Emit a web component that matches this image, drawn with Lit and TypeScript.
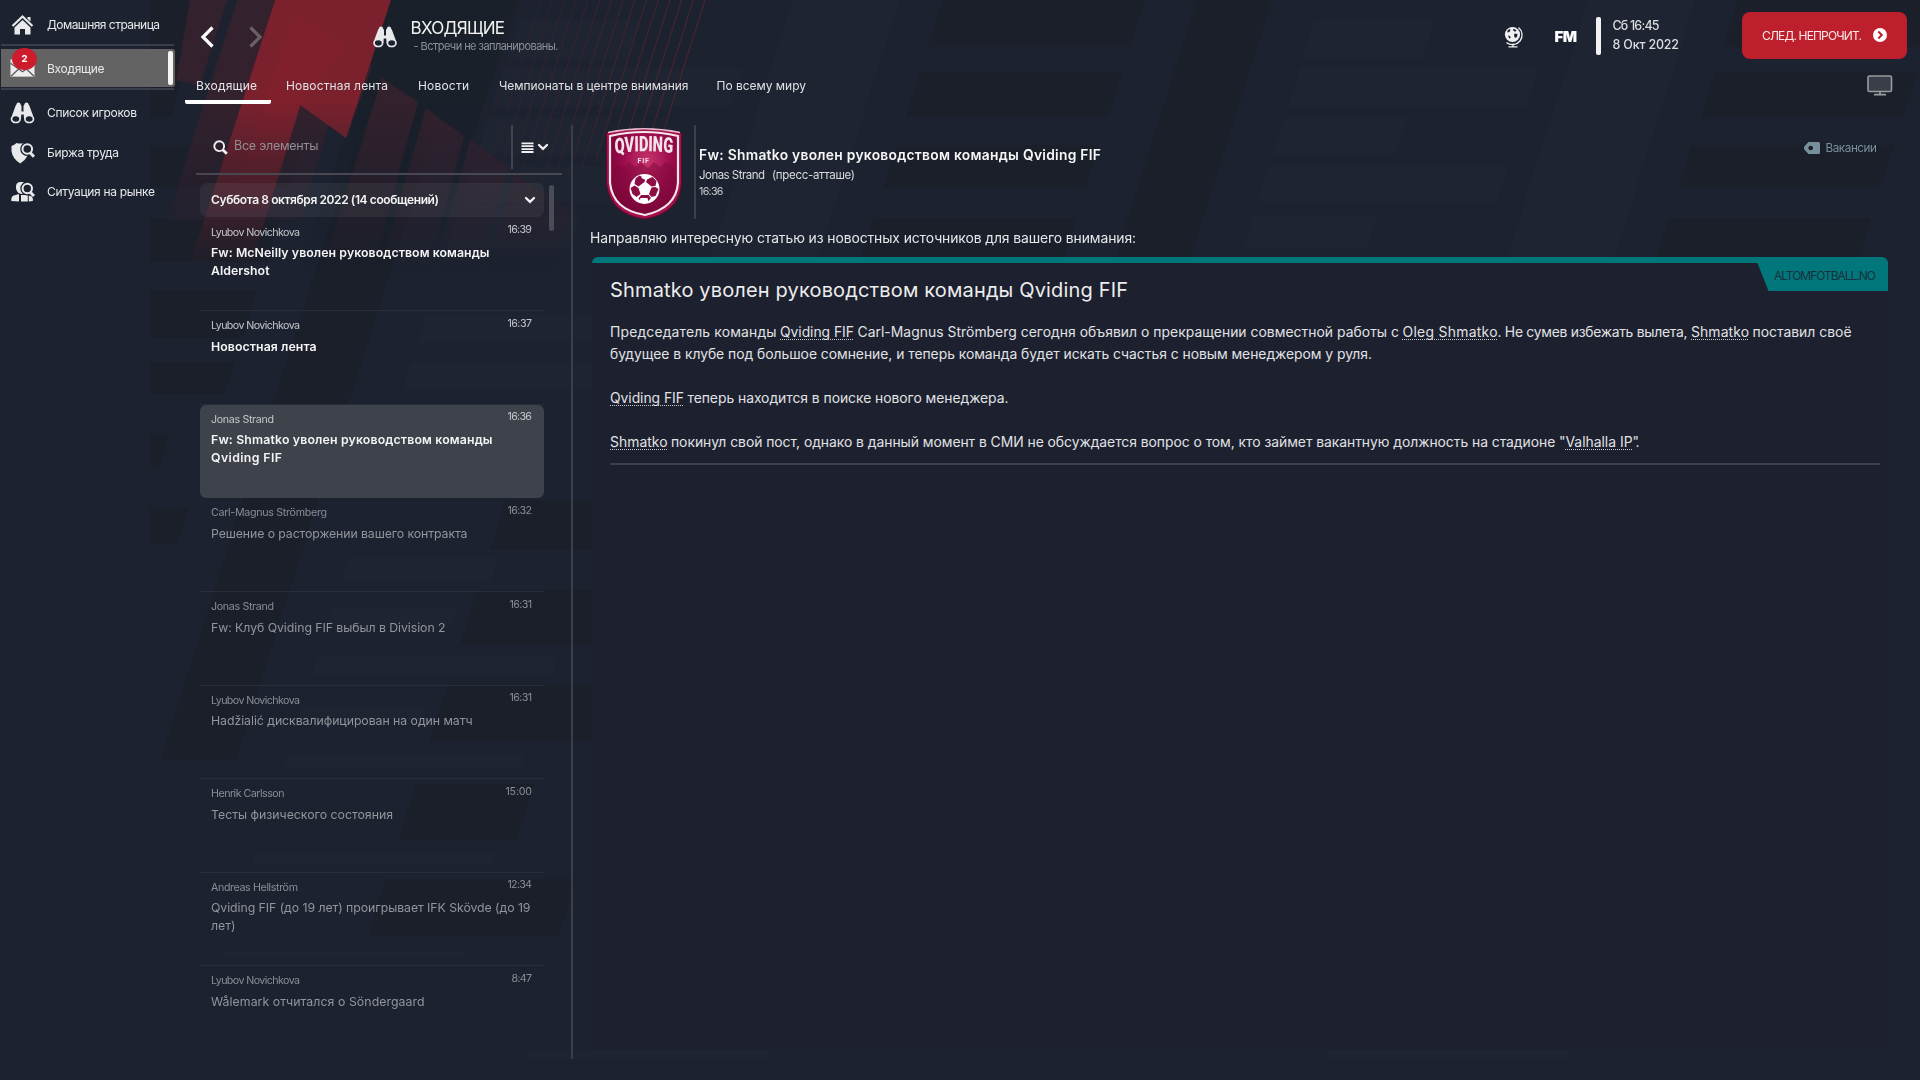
import { LitElement, html, svg, css, nothing } from "lit";
import { customElement, property } from "lit/decorators.js";

/** Text run whose tracking is adjusted so that it fills a given width. */
@customElement("fit-text")
class FitText extends LitElement {
  @property({ type: Number }) w = 0;
  static styles = css`
    :host { display: inline-block; white-space: nowrap; }
  `;
  firstUpdated() {
    const n = (this.textContent ?? "").trim().length;
    if (!this.w || n < 2) return;
    const natural = this.getBoundingClientRect().width;
    this.style.letterSpacing = `${((this.w - natural) / (n - 1)).toFixed(3)}px`;
    this.style.width = `${this.w}px`;
  }
  render() {
    return html`<slot></slot>`;
  }
}

const t = (text: string, w: number, cls = "") => html`<fit-text class=${cls} .w=${w}>${text}</fit-text>`;

type Cell = [number, number, number, number];
const darkCells: Cell[] = [
  [943, 0, 202, 47], [943, 72, 202, 45], [943, 145, 202, 42], [943, 218, 202, 40],
  [1738, 0, 300, 47], [1738, 72, 202, 45], [1738, 145, 202, 42], [1738, 218, 202, 40],
  [147, 0, 60, 117], [147, 145, 202, 42], [147, 218, 202, 44], [147, 290, 202, 48], [147, 362, 202, 32],
  [147, 435, 160, 32], [147, 508, 202, 36], [664, 500, 190, 50], [664, 590, 180, 55],
  [664, 685, 190, 56], [664, 784, 118, 56], [664, 879, 190, 57],
  [401, 0, 75, 760], [1197, 0, 75, 258], [330, 692, 22, 70],
];
const lightCells: Cell[] = [
  [1321, 20, 121, 39], [1321, 68, 240, 38], [1321, 118, 124, 36], [1321, 166, 240, 36], [1321, 215, 124, 33],
  [525, 20, 121, 39], [525, 68, 240, 38], [525, 118, 124, 36], [525, 166, 150, 36], [525, 215, 124, 33],
  [525, 314, 180, 28], [525, 362, 240, 28], [525, 460, 150, 26], [525, 558, 150, 24],
  [525, 608, 124, 20], [525, 657, 240, 18], [525, 706, 124, 14], [525, 755, 240, 14], [525, 853, 240, 11], [525, 951, 240, 7],
  [792, 0, 108, 258], [1588, 0, 108, 258], [860, 1050, 240, 9], [1660, 1050, 240, 9],
];
const cell = (c: Cell, cls: string) => svg`<rect class=${cls} x=${c[0]} y=${c[1]} width=${c[2]} height=${c[3]}></rect>`;

const backdrop = svg`
  <svg class="backdrop" viewBox="0 0 1920 1080" width="1920" height="1080" aria-hidden="true">
    <defs>
      <linearGradient id="fade" x1="0" y1="0" x2="0" y2="270" gradientUnits="userSpaceOnUse">
        <stop offset="0" stop-color="#fff"></stop><stop offset=".38" stop-color="#fff"></stop>
        <stop offset=".6" stop-color="#999"></stop><stop offset="1" stop-color="#000"></stop>
      </linearGradient>
      <mask id="m" maskUnits="userSpaceOnUse" x="0" y="0" width="1920" height="300">
        <rect width="1920" height="300" fill="url(#fade)"></rect>
      </mask>
      <clipPath id="right"><rect x="150" y="0" width="1770" height="1080"></rect></clipPath>
    </defs>
    <g clip-path="url(#right)"><g transform="matrix(1 0 -.316 1 0 0)">
      ${darkCells.map((c) => cell(c, "dk"))}
      ${lightCells.map((c) => cell(c, "lt"))}
    </g></g>
    <g mask="url(#m)">
      <path class="deep" d="M391 0H520L430 270H300Z"></path>
      <path class="wine" d="M190 0H227L200 86 176 80Z"></path>
      <path class="wine" d="M237 0H275L205 220H167Z"></path>
      <path class="wine" d="M382 78L418 102 372 270H322Z"></path>
      <path class="wine" d="M426 108L464 136 428 270H380Z"></path>
      <path class="wine" d="M470 140L508 167 480 270H436Z"></path>
      <path class="wine" d="M514 173L572 211 556 270H488Z"></path>
      <path class="wine" d="M301 105L347 138 372 66 350 54 300 220 262 220Z"></path>
      <path class="red" d="M275 0H391L346 138 300 105 250 270H188Z"></path>
      <path class="red2" d="M295 13L346 46 301 105 268 210H226Z"></path>
      ${Array.from({ length: 17 }, (_, i) => {
        const x = 705 - i * 11.7;
        const y = 132 + i * 6;
        return svg`<path class="ray" style="opacity:${(0.75 - i * 0.035).toFixed(2)}" d="M${x} 0L${x - y * 0.316} ${y}"></path>`;
      })}
    </g>
  </svg>`;

const binoculars = svg`<svg width="24" height="22" viewBox="0 0 24 22">
  <path fill="currentColor" d="M6 2.2a1.9 1.5 0 0 1 4 0L11 4v5.6h2V4l1-1.8a1.9 1.5 0 0 1 4 0L19 4l3.5 9.5-.2 3L13.6 17l-.4-4.4h-2.4L10.400 17 1.700 16.500l-.2-3L5 4Z"></path>
  <g fill="#1c222f" stroke="currentColor" stroke-width="1.700"><ellipse cx="5.300" cy="17" rx="4.300" ry="3.500"></ellipse><ellipse cx="18.700" cy="17" rx="4.300" ry="3.500"></ellipse></g></svg>`;

const icons = {
  home: svg`<svg width="24" height="22" viewBox="0 0 24 22"><path fill="none" stroke="currentColor" stroke-width="2.200" d="M2 12L12 2.500 22 12"></path>
    <path fill="currentColor" d="M12 6L20 13.500V20.500H14.500V15h-5v5.500H4V13.500ZM17 3h3v4.500l-3-2.800Z"></path></svg>`,
  mail: svg`<svg width="26" height="20" viewBox="0 0 26 20"><path fill="#ececec" d="M.5 1h25v18H.5Z"></path>
    <path fill="none" stroke="#5b5b5b" stroke-width="1.300" d="M.5 5L13 14 25.500 5M1 18.500L9 11M25 18.500L17 11"></path></svg>`,
  binoculars,
  shield: svg`<svg width="24" height="22" viewBox="0 0 24 22"><path fill="currentColor" d="M1 4Q4 3 6 1q4 1 8 0l2 2.500 2 9Q15 18 9.700 21.500 1.500 16 1 9Z"></path>
    <circle cx="16.800" cy="7" r="5.200" fill="#1c222f" stroke="#1c222f" stroke-width="3.800"></circle>
    <circle cx="16.800" cy="7" r="4.800" fill="none" stroke="currentColor" stroke-width="2"></circle><path stroke="currentColor" stroke-width="3" d="M19.500 10.500l4 4.300"></path></svg>`,
  people: svg`<svg width="24" height="22" viewBox="0 0 24 22"><path fill="currentColor" d="M5.500 5Q6 1 10 1h3v12H11L8 12Q5 9 5.500 5ZM.8 20q-.5-5 3.500-5.700L8.500 13V20.500Zm9-6h7.500v6.500H9.800ZM18.300 14.500l3 1q1.500 2 1 4.500l-4 .5Z"></path>
    <path stroke="#1c222f" d="M10 14v7"></path>
    <circle cx="16.800" cy="7.500" r="5.200" fill="#1c222f" stroke="#1c222f" stroke-width="3.600"></circle>
    <circle cx="16.800" cy="7.500" r="4.700" fill="none" stroke="currentColor" stroke-width="2"></circle><path stroke="currentColor" stroke-width="3" d="M19.500 11l4 4"></path></svg>`,
};
const chevron = (w: number, h: number, sw: number) => svg`<svg width=${w} height=${h} viewBox="0 0 12 8"><path fill="none" stroke="currentColor" stroke-width=${sw} stroke-linecap="round" d="M2 2l4 3.800L10 2"></path></svg>`;

const ball = svg`<g transform="translate(39.500 62)">
  <circle r="15" fill="#fff"></circle>
  <g fill="#8d0c43">
  <path d="M-5-13.500L1-10.500 0-7-6-2.500-10-5-9-10.500Z"></path><path d="M8-12l4 4-1 5-4 .5L1.500-7 3-10Z"></path>
  <path d="M-14-1l4-2.500L-6-1-4 5-8 8-12 5Z"></path><path d="M14 0l-3 7-4 1-2.500-3L7-1.500 11-2Z"></path>
  <path d="M-6 9.500L-3.500 6H4L6.500 9 3 13H-3Z"></path></g>
  <g fill="#fff"><path d="M-5-2L0-5.500 5-2 3.300 4H-3.300Z"></path><path d="M-3-14h6l2 3-4 2-4-2Z"></path><path d="M-4 9h7l1 4-5 1.500-4-2Z"></path></g>
</g>`;
const crest = svg`<svg class="crest" width="78" height="94" viewBox="0 0 78 94">
  <defs>
    <radialGradient id="cg" cx=".55" cy=".35" r=".7"><stop offset="0" stop-color="#c8356f"></stop><stop offset=".5" stop-color="#9c0b4b"></stop><stop offset="1" stop-color="#700432"></stop></radialGradient>
    <path id="arc" d="M10 16.200Q39 13.200 70 16.200"></path>
  </defs>
  <path fill="#a50f4c" stroke="#5e0a2c" stroke-width="1" d="M1.500 6Q39-2 76.500 6V57Q74 86 40 92 6 88 1.500 57Z"></path>
  <path fill="none" stroke="#e9b6cc" stroke-width="1.300" d="M3 5.500Q39-2 75 5.500"></path>
  <path fill="url(#cg)" stroke="#f3e6ec" stroke-width="2.200" d="M5 9Q39 1 73 9V56Q71 81 40 88 8 83 5 56Z"></path>
  <path fill="#7d0739" opacity=".5" d="M8 42l5-5 5 4 6-6 6 5 6-4 7 5 6-6 6 5 6-5 9 6V56Q68 78 40 85 10 80 8 56Z"></path>
  ${ball}
  <g transform="scale(1 1.650)"><text class="crest-name"><textPath href="#arc" textLength="58" lengthAdjust="spacingAndGlyphs">QVIDING</textPath></text></g>
  <text class="crest-fif" x="32.500" y="35.500">FIF</text>
</svg>`;

const globe = svg`<svg width="20" height="22" viewBox="0 0 20 22"><circle cx="8.500" cy="8.500" r="7.600" fill="#f0f0f0"></circle>
  <path fill="#1c222f" d="M3.500 4.500l2-1.500 1 1-1 2-2 .5ZM9 3l2 .3 1.500 1.500-1.500 1-1.500-1ZM10.500 7.500l3 .5-.5 3-2 1-1-2.500ZM4 9.500l2 .5.7 2-1.500.6Z"></path>
  <path fill="none" stroke="#f0f0f0" stroke-width="1.300" d="M14.500 1.500A9.600 9.600 0 0 1 2.500 16.500M9 17.500V20.500M4.500 20.800h9"></path></svg>`;
const monitor = svg`<svg width="26" height="22" viewBox="0 0 26 22"><rect x="1" y="1" width="23.500" height="15.500" rx="1.500" fill="#3a3e49" stroke="#999b9e" stroke-width="1.600"></rect>
  <path stroke="#999b9e" stroke-width="1.600" d="M13 16.500v3M7 19.600h12"></path></svg>`;
const tagIcon = svg`<svg width="16" height="12" viewBox="0 0 16 12"><path fill="#78909c" fill-rule="evenodd" d="M4.500 0H14.500Q16 0 16 1.500V10.500Q16 12 14.500 12H4.500L.3 7.500Q-.4 6 .3 4.500ZM6.700 3.700a2.300 2.300 0 1 0 .01 0Z"></path></svg>`;

interface Mail { from: [string, number]; time: [string, number]; title: [string, number][]; state: string; }
const mails: Mail[] = [
  { from: ["Lyubov Novichkova", 89], time: ["16:39", 24.5], title: [["Fw: McNeilly уволен руководством команды", 278.5], ["Aldershot", 58.500]], state: "unread" },
  { from: ["Lyubov Novichkova", 89], time: ["16:37", 24.5], title: [["Новостная лента", 105.500]], state: "unread" },
  { from: ["Jonas Strand", 63], time: ["16:36", 24.5], title: [["Fw: Shmatko уволен руководством команды", 281.5], ["Qviding FIF", 71]], state: "unread selected" },
  { from: ["Carl-Magnus Strömberg", 116], time: ["16:32", 24.5], title: [["Решение о расторжении вашего контракта", 256.5]], state: "" },
  { from: ["Jonas Strand", 63], time: ["16:31", 22.5], title: [["Fw: Клуб Qviding FIF выбыл в Division 2", 234.5]], state: "" },
  { from: ["Lyubov Novichkova", 89], time: ["16:31", 22.5], title: [["Hadžialić дисквалифицирован на один матч", 261.5]], state: "" },
  { from: ["Henrik Carlsson", 73.500], time: ["15:00", 26.5], title: [["Тесты физического состояния", 182]], state: "" },
  { from: ["Andreas Hellström", 87], time: ["12:34", 24.5], title: [["Qviding FIF (до 19 лет) проигрывает IFK Skövde (до 19", 319.5], ["лет)", 24.500]], state: "" },
  { from: ["Lyubov Novichkova", 89], time: ["8:47", 20.5], title: [["Wålemark отчитался о Söndergaard", 213.500]], state: "" },
];

const nav: [keyof typeof icons, string, number, string][] = [
  ["home", "Домашняя страница", 113, "n1"],
  ["mail", "Входящие", 57.500, "active"],
  ["binoculars", "Список игроков", 90, "n3"],
  ["shield", "Биржа труда", 72, "n4"],
  ["people", "Ситуация на рынке", 108, "n5"],
];
const tabs: [string, number][] = [["Входящие", 61], ["Новостная лента", 102], ["Новости", 51], ["Чемпионаты в центре внимания", 189.500], ["По всему миру", 89.500]];

@customElement("app-root")
class AppRoot extends LitElement {
  static styles = css`
    :host { display: block; }
    * { box-sizing: border-box; }
    svg { display: block; flex: none; }
    .app { position: relative; width: 1920px; height: 1080px; overflow: hidden; background: #1c2230; color: #e8e9eb; font-family: Inter, Roboto, "Liberation Sans", sans-serif; font-size: 12px; line-height: 18px; }
    .backdrop { position: absolute; left: 0; top: 0; }
    .dk { fill: #1a1f2a; } .lt { fill: #1e2431; }
    .deep { fill: #19202a; } .wine { fill: #33212d; } .red { fill: #7a212d; } .red2 { fill: #85202c; opacity: .45; }
    .ray { stroke: #582630; stroke-width: 1.200; fill: none; }
    .shell { position: relative; display: flex; height: 1080px; }
    .side { width: 175px; padding-top: 6px; display: flex; flex-direction: column; }
    .rule { width: 173px; height: 2px; margin-left: 1px; background: #393e4a; flex: none; }
    .nav { display: flex; align-items: center; width: 174px; padding-left: 10px; flex: none; }
    .nav svg { margin-right: 12px; width: 25px; }
    .n1 { height: 38px; } .n3 { height: 46px; } .n4 { height: 34px; } .n5 { height: 44px; }
    .nav.active { position: relative; height: 38px; margin: 3px 0 1px 1px; padding-left: 9px; background: #636363; border-radius: 0 3px 3px 0; }
    .nav.active fit-text { padding-top: 1px; }
    .nav.active::after { content: ""; width: 5px; height: 34px; border-radius: 2px; background: #f4f4f4; margin-left: auto; margin-right: 2px; }
    .badge { position: absolute; left: 11px; top: -1px; width: 25px; height: 22px; border-radius: 50%; background: #cd1c2c; color: #fff; font-size: 9.500px; font-weight: 700; display: flex; align-items: center; justify-content: center; }
    .main { flex: 1; display: flex; flex-direction: column; }
    .head { flex: none; height: 72px; display: flex; align-items: flex-start; padding-left: 25px; }
    .arrows { display: flex; gap: 35px; padding-top: 26px; width: 173px; }
    .arrows .off { color: #6b6068; }
    .head-icon { padding-top: 26px; width: 37.500px; }
    .title { padding-top: 17px; flex: 1; display: flex; flex-direction: column; align-items: flex-start; }
    .title .big { font-size: 17px; line-height: 22px; color: #f2f2f2; }
    .title .sub { font-size: 11px; line-height: 14px; margin-left: 3px; color: #8c8f96; }
    .globe { padding-top: 26px; width: 51px; }
    .fm { padding-top: 28px; width: 41px; font-weight: 900; font-size: 15px; line-height: 18px; color: #fff; }
    .bar { width: 5px; height: 38px; margin: 17px 12px 0 0; border-radius: 2px; background: #f2f2f2; }
    .date { width: 129.500px; padding-top: 17px; display: flex; flex-direction: column; align-items: flex-start; font-size: 12.500px; line-height: 18.500px; font-weight: 500; color: #dcdde0; }
    .next { width: 165px; height: 47px; margin: 12px 13px 0 0; border-radius: 8px; background: #bd1f2d; color: #fbe9ea; display: flex; align-items: center; padding-left: 20px; }
    .next svg { margin-left: 11px; margin-top: -2px; }
    .tabs { flex: none; height: 32px; display: flex; padding-left: 10px; }
    .tab { padding: 5px 0 0 0; height: 32px; margin-right: 30px; color: #e0e1e4; }
    .tab:nth-child(4) { margin-right: 28px; }
    .tab.on { width: 86px; padding-left: 11px; margin-right: 15px; border-bottom: 4px solid #fff; border-radius: 2px; color: #e8e8ea; }
    .monitor { margin: 3px 27px 0 auto; }
    .body { flex: 1; min-height: 0; display: flex; padding: 21px 32px 21px 21px; }
    .list { width: 366px; }
    .search { height: 50px; display: flex; align-items: flex-start; border-bottom: 2px solid #474852; padding-left: 17px; }
    .search .q { font-size: 12.500px; padding: 12px 0 0 6px; flex: 1; color: #918e95; }
    .search .glass { margin-top: 14.500px; }
    .search .sort { height: 44px; width: 51px; border-left: 2px solid #41444f; padding-left: 8px; display: flex; align-items: center; gap: 3px; color: #f0f0f0; }
    .scroll { display: flex; padding: 8px 0 0 4px; }
    .rows { width: 344px; }
    .group { height: 34px; margin-bottom: .700px; border-radius: 7px; background: rgba(255,255,255,.055); display: flex; align-items: center; justify-content: space-between; padding: 0 8px 0 11px; font-weight: 600; color: #f4f4f5; }
    .thumb { width: 5px; height: 46px; margin: 2px 0 0 5px; border-radius: 2.500px; background: #4a4d58; }
    .mail { height: 93.580px; border-bottom: 1px solid #282d39; padding: 6px 12px 0 11px; color: #92959b; display: flex; flex-direction: column; }
    .mail .top { display: flex; justify-content: space-between; height: 20px; font-size: 10.700px; line-height: 18px; color: #8a8d94; }
    .mail .time { margin-top: -2.500px; }
    .mail .line { height: 18px; font-size: 12.300px; }
    .mail .lines { padding-top: .5px; }
    .mail.unread { color: #f4f4f5; font-weight: 600; }
    .mail.unread .top { color: #c4c6ca; font-weight: 400; }
    .mail.selected { background: #3d424b; border-radius: 6px; border-bottom-color: transparent; }
    .mail:last-child { border-bottom: 0; height: 84px; }
    .split { width: 2px; margin: 0 17px 0 9px; background: #3b3f4b; }
    .detail { flex: 1; display: flex; flex-direction: column; }
    .info { height: 94px; display: flex; }
    .crest { margin: 2px 11px 0 15px; }
    .crest-name { font: 900 13px Roboto, sans-serif; fill: #f3e3ea; }
    .crest-fif { font: 700 7px Roboto, sans-serif; letter-spacing: .8px; fill: #f3e3ea; }
    .info .who { border-left: 2px solid #3b3f4b; padding: 20px 0 0 3px; flex: 1; display: flex; flex-direction: column; }
    .who .subj { font-size: 13.800px; line-height: 20px; font-weight: 600; color: #f6f6f7; }
    .who .from { display: flex; gap: 7px; font-size: 11.500px; line-height: 20px; color: #dadbde; }
    .who .at { font-size: 10.700px; line-height: 13px; color: #c9cbcf; }
    .label { display: flex; align-items: center; height: 18px; gap: 6px; margin: 14px 11px 0 0; font-size: 11.700px; color: #78909c; }
    .intro { height: 38px; padding-top: 9px; font-size: 13.900px; line-height: 20px; color: #e6e7e9; }
    .card { position: relative; flex: 1; margin: 0 0 9px 2px; background: #1d202e; border-top: 6px solid #02777b; border-radius: 6px; padding: 15px 8px 0 18px; }
    .source { position: absolute; right: 0; top: -1px; width: 131px; height: 29px; background: #02777b; clip-path: polygon(0 0, 100% 0, 100% 100%, 11.500px 100%); padding: 5px 0 0 17px; font-size: 12px; color: #17313f; }
    .card .h { font-size: 20px; line-height: 24px; height: 43px; color: #eceded; }
    .p { display: flex; font-size: 13.900px; line-height: 22px; height: 22px; color: #e0e2e5; }
    .sp { margin-left: 3.500px; }
    .gap { height: 22px; }
    .lk { text-decoration: underline dotted 1px #c9cbd0; text-underline-offset: 2px; text-decoration-skip-ink: none; }
    .hr { height: 2px; margin-top: 10px; background: #3c3f4d; }
  `;

  render() {
    const back = svg`<svg width="14" height="22" viewBox="0 0 14 22"><path fill="none" stroke="#fff" stroke-width="3.200" d="M12.500 1.500L3 11l9.500 9.500"></path></svg>`;
    const fwd = svg`<svg width="14" height="22" viewBox="0 0 14 22"><path fill="none" stroke="currentColor" stroke-width="3.200" d="M1.500 1.500L11 11l-9.500 9.500"></path></svg>`;
    return html`<div class="app">
      ${backdrop}
      <div class="shell">
        <nav class="side">
          ${nav.map(([icon, label, w, cls]) => html`
            ${cls === "active" ? html`<div class="rule"></div>` : nothing}
            <div class="nav ${cls}">${icons[icon]}${t(label, w)}${cls === "active" ? html`<span class="badge">2</span>` : nothing}</div>
            ${cls === "active" ? html`<div class="rule"></div>` : nothing}`)}
        </nav>
        <div class="main">
          <header class="head">
            <div class="arrows">${back}<span class="off">${fwd}</span></div>
            <div class="head-icon">${binoculars}</div>
            <div class="title">${t("ВХОДЯЩИЕ", 94.5, "big")}${t("- Встречи не запланированы.", 145, "sub")}</div>
            <div class="globe">${globe}</div>
            <div class="fm">${t("FM", 22.5)}</div>
            <div class="bar"></div>
            <div class="date">${t("Сб 16:45", 47)}${t("8 Окт 2022", 66.5)}</div>
            <div class="next">${t("СЛЕД. НЕПРОЧИТ.", 100)}
              <svg width="14" height="14" viewBox="0 0 14 14"><circle cx="7" cy="7" r="7" fill="#fff"></circle><path fill="none" stroke="#bd1f2d" stroke-width="2" d="M5.300 3.500L8.800 7l-3.500 3.500"></path></svg>
            </div>
          </header>
          <div class="tabs">
            ${tabs.map(([label, w], i) => html`<div class="tab ${i === 0 ? "on" : ""}">${t(label, w)}</div>`)}
            <div class="monitor">${monitor}</div>
          </div>
          <div class="body">
            <section class="list">
              <div class="search">
                <svg class="glass" width="15" height="15" viewBox="0 0 15 15"><circle cx="6.200" cy="6.200" r="4.900" fill="none" stroke="#f2f2f2" stroke-width="1.900"></circle><path stroke="#f2f2f2" stroke-width="2.800" d="M9.500 9.500l4.300 4.300"></path></svg>
                <div class="q">${t("Все элементы", 84.5)}</div>
                <div class="sort"><svg width="13" height="11" viewBox="0 0 13 11"><path stroke="currentColor" stroke-width="1.800" d="M.5 1.300h12M.5 4.200h12M.5 7.100h12M.5 10h12"></path></svg>${chevron(12, 8, 2.3)}</div>
              </div>
              <div class="scroll">
                <div class="rows">
                  <div class="group">${t("Суббота 8 октября 2022 (14 сообщений)", 228)}${chevron(12, 8, 2.3)}</div>
                  ${mails.map((m) => html`<div class="mail ${m.state}">
                    <div class="top">${t(m.from[0], m.from[1])}${t(m.time[0], m.time[1], "time")}</div>
                    <div class="lines">${m.title.map(([s, w]) => html`<div class="line">${t(s, w)}</div>`)}</div>
                  </div>`)}
                </div>
                <div class="thumb"></div>
              </div>
            </section>
            <div class="split"></div>
            <section class="detail">
              <div class="info">
                ${crest}
                <div class="who">
                  <div class="subj">${t("Fw: Shmatko уволен руководством команды Qviding FIF", 402)}</div>
                  <div class="from">${t("Jonas Strand", 66)}${t("(пресс-атташе)", 83)}</div>
                  <div class="at">${t("16:36", 24.5)}</div>
                </div>
                <div class="label">${tagIcon}${t("Вакансии", 51.5)}</div>
              </div>
              <div class="intro">${t("Направляю интересную статью из новостных источников для вашего внимания:", 546)}</div>
              <article class="card">
                <div class="source">${t("ALTOMFOTBALL.NO", 102)}</div>
                <div class="h">${t("Shmatko уволен руководством команды Qviding FIF", 518)}</div>
                <div class="p">${t("Председатель команды", 166.5)}${t("Qviding FIF", 74, "lk sp")}${t("Carl-Magnus Strömberg сегодня объявил о прекращении совместной работы с", 541.5, "sp")}${t("Oleg Shmatko", 95, "lk sp")}${t(". Не сумев избежать вылета,", 190)}${t("Shmatko", 58, "lk sp")}${t("поставил своё", 99, "sp")}</div>
                <div class="p">${t("будущее в клубе под большое сомнение, и теперь команда будет искать счастья с новым менеджером у руля.", 762)}</div>
                <div class="gap"></div>
                <div class="p">${t("Qviding FIF", 74, "lk")}${t("теперь находится в поиске нового менеджера.", 321, "sp")}</div>
                <div class="gap"></div>
                <div class="p">${t("Shmatko", 57.5, "lk")}${t("покинул свой пост, однако в данный момент в СМИ не обсуждается вопрос о том, кто займет вакантную должность на стадионе \"", 894.5, "sp")}${t("Valhalla IP", 67, "lk")}${t("\".", 7)}</div>
                <div class="hr"></div>
              </article>
            </section>
          </div>
        </div>
      </div>
    </div>`;
  }
}
